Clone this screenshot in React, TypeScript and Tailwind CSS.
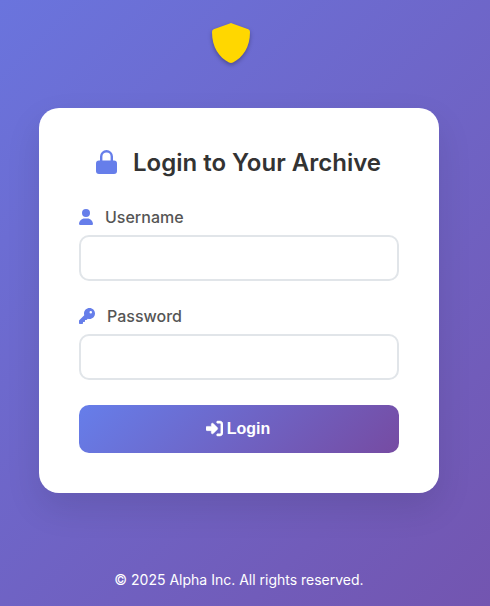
import React from "react";
import { FaUser, FaKey, FaRightToBracket } from "react-icons/fa6";

function LockIcon() {
  return (
    <svg viewBox="0 0 21 24" className="mr-4 -mt-0.5 h-6 w-[21px] shrink-0 text-[#667eea]">
      <path d="M5.2 12V6.5a5.3 5.3 0 0 1 10.6 0V12" fill="none" stroke="currentColor" strokeWidth="2.4" />
      <rect y="10.5" width="21" height="13.5" rx="3" fill="currentColor" />
    </svg>
  );
}

function Field({ id, label, type, icon, gap }: { id: string; label: string; type: string; icon: React.ReactNode; gap: string }) {
  return (
    <div className={gap}>
      <label htmlFor={id} className="mb-2 flex h-[19px] items-center text-base leading-[19px] font-medium text-[#555]">
        <span className="mr-3 -mt-px text-[#667eea]">{icon}</span>
        {label}
      </label>
      <input id={id} type={type} className="block h-[46px] w-full rounded-[10px] border-2 border-[#e1e5e9] bg-white px-4 outline-none" />
    </div>
  );
}

export default function App() {
  return (
    <div className="flex h-[606px] w-[490px] flex-col overflow-hidden bg-[linear-gradient(135deg,#6a74dd_0%,#7355b0_100%)] font-['Inter',sans-serif]">
      <header className="flex h-[108px] justify-center pt-[23px] pr-7">
        <svg viewBox="0 0 38 40" className="h-10 w-[38px] drop-shadow-[0_2px_2px_rgba(0,0,0,0.3)]" fill="#ffd700">
          <path d="M17.8.4Q19-.2 20.2.4L36.3 6.2Q38 6.8 38 9C38 24 31 34.5 21 39.5Q19 40.4 17 39.5C7 34.5 0 24 0 9Q0 6.8 1.7 6.2Z" />
        </svg>
      </header>
      <main className="ml-[39px] h-[385px] w-[400px] shrink-0 rounded-[20px] bg-white px-10 pt-10 shadow-[0_15px_35px_rgba(0,0,0,0.1)]">
        <h1 className="mb-[30px] flex h-[30px] items-center justify-center pr-px text-2xl font-semibold text-[#333]">
          <LockIcon />
          Login to Your Archive
        </h1>
        <Field id="username" label="Username" type="text" gap="mb-[26px]" icon={<FaUser className="h-4 w-3.5" />} />
        <Field id="password" label="Password" type="password" gap="mb-[25px]" icon={<FaKey />} />
        <button className="flex h-12 w-full items-center justify-center gap-1 rounded-[10px] bg-[linear-gradient(135deg,#667eea,#764ba2)] pr-0.5 font-['Liberation_Sans',sans-serif] text-base font-bold text-white">
          <FaRightToBracket className="-mt-px size-[17px]" stroke="currentColor" strokeWidth="16" />
          Login
        </button>
      </main>
      <footer className="mt-[78px] pr-3 text-center text-sm leading-[17px] text-white">© 2025 Alpha Inc. All rights reserved.</footer>
    </div>
  );
}
